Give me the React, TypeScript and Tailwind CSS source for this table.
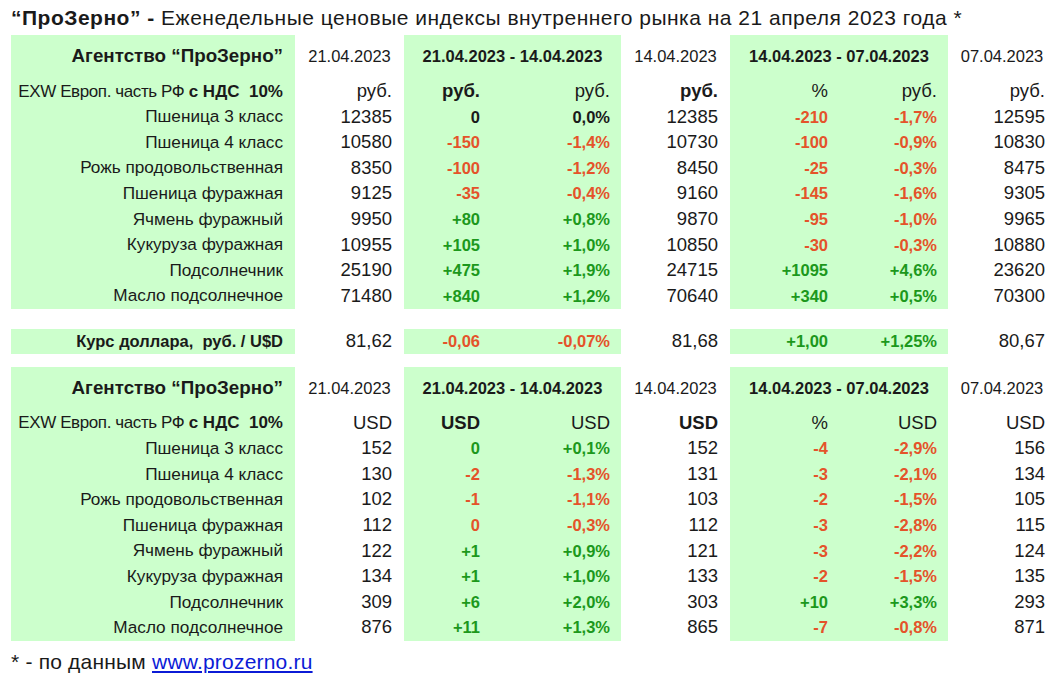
import React from 'react'

type Row = [string, string, string, string, string, string, string, string]

const RUB_ROWS: Row[] = [
  ['Пшеница 3 класс', '12385', '0', '0,0%', '12385', '-210', '-1,7%', '12595'],
  ['Пшеница 4 класс', '10580', '-150', '-1,4%', '10730', '-100', '-0,9%', '10830'],
  ['Рожь продовольственная', '8350', '-100', '-1,2%', '8450', '-25', '-0,3%', '8475'],
  ['Пшеница фуражная', '9125', '-35', '-0,4%', '9160', '-145', '-1,6%', '9305'],
  ['Ячмень фуражный', '9950', '+80', '+0,8%', '9870', '-95', '-1,0%', '9965'],
  ['Кукуруза фуражная', '10955', '+105', '+1,0%', '10850', '-30', '-0,3%', '10880'],
  ['Подсолнечник', '25190', '+475', '+1,9%', '24715', '+1095', '+4,6%', '23620'],
  ['Масло подсолнечное', '71480', '+840', '+1,2%', '70640', '+340', '+0,5%', '70300'],
]

const USD_ROWS: Row[] = [
  ['Пшеница 3 класс', '152', '0', '+0,1%', '152', '-4', '-2,9%', '156'],
  ['Пшеница 4 класс', '130', '-2', '-1,3%', '131', '-3', '-2,1%', '134'],
  ['Рожь продовольственная', '102', '-1', '-1,1%', '103', '-2', '-1,5%', '105'],
  ['Пшеница фуражная', '112', '0', '-0,3%', '112', '-3', '-2,8%', '115'],
  ['Ячмень фуражный', '122', '+1', '+0,9%', '121', '-3', '-2,2%', '124'],
  ['Кукуруза фуражная', '134', '+1', '+1,0%', '133', '-2', '-1,5%', '135'],
  ['Подсолнечник', '309', '+6', '+2,0%', '303', '+10', '+3,3%', '293'],
  ['Масло подсолнечное', '876', '+11', '+1,3%', '865', '-7', '-0,8%', '871'],
]

const GRID = 'grid grid-cols-[284px_109px_88px_129px_109px_110px_108px_108px]'
const GREEN = 'bg-[#ccffcc]'

// colour of a change cell follows the sign of the percent next to it
function tone(pct: string) {
  if (pct.startsWith('-')) return 'text-[#e4532a]'
  if (pct.startsWith('+')) return 'text-[#1c981c]'
  return 'text-[#1a1a1a]'
}

function Cell({ green, className = '', children }: { green?: boolean; className?: string; children?: React.ReactNode }) {
  return (
    <div className={`flex items-center justify-end whitespace-pre ${green ? GREEN : ''} ${className}`}>{children}</div>
  )
}

function HeaderRows({ unit }: { unit: string }) {
  return (
    <>
      <div className={`${GRID} h-[43px] text-[16.5px]`}>
        <Cell green className="pr-3 font-bold text-[18.8px]">Агентство “ПроЗерно”</Cell>
        <Cell className="!justify-center">21.04.2023</Cell>
        <Cell green className="col-span-2 !justify-center font-bold">21.04.2023 - 14.04.2023</Cell>
        <Cell className="!justify-center">14.04.2023</Cell>
        <Cell green className="col-span-2 !justify-center font-bold">14.04.2023 - 07.04.2023</Cell>
        <Cell className="!justify-center">07.04.2023</Cell>
      </div>
      <div className={`${GRID} h-[26px] text-[18.5px]`}>
        <Cell green className="pr-3 text-[17px]">
          <span className="tracking-[-0.4px]">EXW Европ. часть РФ </span>
          <span className="font-bold">с НДС  10%</span>
        </Cell>
        <Cell className="pr-3">{unit}</Cell>
        <Cell green className="pr-3 font-bold">{unit}</Cell>
        <Cell green className="pr-[11px]">{unit}</Cell>
        <Cell className="pr-3 font-bold">{unit}</Cell>
        <Cell green className="pr-3">%</Cell>
        <Cell green className="pr-[11px]">{unit}</Cell>
        <Cell className="pr-[11px]">{unit}</Cell>
      </div>
    </>
  )
}

function DataRow({ row, bold, height = 'h-[25.6px]' }: { row: Row; bold?: boolean; height?: string }) {
  const [label, a, d1, p1, b, d2, p2, c] = row
  return (
    <div className={`${GRID} ${height} text-[18.5px]`}>
      <Cell green className={`pr-3 ${bold ? 'font-bold text-[16.5px]' : 'text-[17.2px]'}`}>{label}</Cell>
      <Cell className="pr-3">{a}</Cell>
      <Cell green className={`pr-3 text-[16.5px] font-bold ${tone(p1)}`}>{d1}</Cell>
      <Cell green className={`pr-[11px] text-[16.5px] font-bold ${tone(p1)}`}>{p1}</Cell>
      <Cell className="pr-3">{b}</Cell>
      <Cell green className={`pr-3 text-[16.5px] font-bold ${tone(p2)}`}>{d2}</Cell>
      <Cell green className={`pr-[11px] text-[16.5px] font-bold ${tone(p2)}`}>{p2}</Cell>
      <Cell className="pr-[11px]">{c}</Cell>
    </div>
  )
}

export default function App() {
  return (
    <div className="w-[1056px] h-[673px] bg-white text-[#1a1a1a] pl-[11px] font-['Liberation_Sans',Arial,sans-serif] leading-none">
      <div className="h-[35px] flex items-center text-[21px] tracking-[0.5px]">
        <span className="font-bold whitespace-pre">“ПроЗерно” - </span>
        <span>Еженедельные ценовые индексы внутреннего рынка на 21 апреля 2023 года *</span>
      </div>

      <HeaderRows unit="руб." />
      {RUB_ROWS.map((r) => (
        <DataRow key={r[0]} row={r} />
      ))}

      <div className="h-[20px]" />
      <DataRow row={['Курс доллара,  руб. / U$D', '81,62', '-0,06', '-0,07%', '81,68', '+1,00', '+1,25%', '80,67']} bold height="h-[25px]" />
      <div className="h-[13px]" />

      <HeaderRows unit="USD" />
      {USD_ROWS.map((r) => (
        <DataRow key={r[0]} row={r} />
      ))}

      <div className="h-[40px] flex items-center text-[21px] tracking-[0.2px] pt-[1px]">
        <span className="whitespace-pre">* - по данным </span>
        <span className="text-[#0b1bd6] underline underline-offset-2">www.prozerno.ru</span>
      </div>
    </div>
  )
}
